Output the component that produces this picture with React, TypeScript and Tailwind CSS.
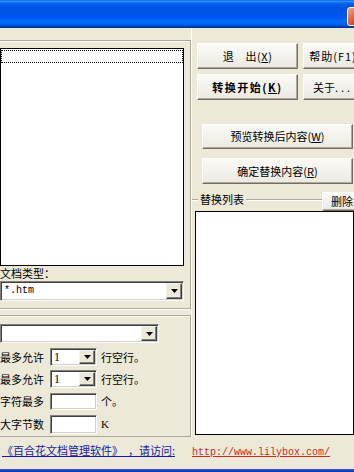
import React from "react";

function Btn({
  children,
  className,
}: {
  children: React.ReactNode;
  className?: string;
}) {
  return (
    <div
      className={`shrink-0 flex items-center justify-center whitespace-nowrap bg-[linear-gradient(#fbfaf6,#ebe9e1)] border border-t-white border-l-white border-r-[#716f64] border-b-[#716f64] shadow-[inset_-1px_-1px_0_#aca899] leading-none ${className ?? ""}`}
    >
      {children}
    </div>
  );
}

function DropBtn() {
  return (
    <div className="w-[16px] h-full shrink-0 flex items-center justify-center bg-[#ece9d8] border border-t-[#f4f3ee] border-l-[#f4f3ee] border-r-[#404040] border-b-[#404040] shadow-[inset_-1px_-1px_0_#808080]">
      <svg width="7" height="4" viewBox="0 0 7 4">
        <polygon points="0,0 7,0 3.5,4" fill="#000" />
      </svg>
    </div>
  );
}

function Combo({
  value,
  serif,
  className,
}: {
  value?: string;
  serif?: boolean;
  className?: string;
}) {
  return (
    <div
      className={`flex items-stretch bg-white border border-t-[#808080] border-l-[#808080] border-r-white border-b-white shadow-[inset_1px_1px_0_#404040,inset_-1px_-1px_0_#d4d0c8] p-[1px] ${className ?? ""}`}
    >
      <span
        className={`flex-1 pl-[2px] flex items-center leading-none ${serif ? "font-['Liberation_Serif',serif] text-[12px]" : "font-['Liberation_Mono',monospace] text-[10px]"}`}
      >
        {value}
      </span>
      <DropBtn />
    </div>
  );
}

function Field({ className }: { className?: string }) {
  return (
    <div
      className={`bg-white border border-t-[#808080] border-l-[#808080] border-r-white border-b-white shadow-[inset_1px_1px_0_#404040,inset_-1px_-1px_0_#d4d0c8] ${className ?? ""}`}
    />
  );
}

function OptRow({
  label,
  combo,
  tail,
  className,
}: {
  label: string;
  combo: boolean;
  tail: string;
  className?: string;
}) {
  return (
    <div className={`flex items-center ${className ?? ""}`}>
      <span className="w-[50px] shrink-0 leading-none">{label}</span>
      {combo ? (
        <Combo value="1" serif className="w-[47px] h-full" />
      ) : (
        <Field className="w-[47px] h-full" />
      )}
      <span
        className={`ml-[4px] leading-none ${tail === "K" ? "font-['Liberation_Serif',serif] text-[11px]" : ""}`}
      >
        {tail}
      </span>
    </div>
  );
}

export default function App() {
  return (
    <div className="w-[354px] h-[472px] overflow-hidden bg-[#ece9d8] flex flex-col text-[11px] text-black font-['Noto_Sans_CJK_SC','Noto_Sans',sans-serif]">
      {/* title bar */}
      <div className="h-[28px] shrink-0 flex justify-end items-start pt-[7px] bg-[linear-gradient(180deg,#0058ee_0%,#3593ff_4%,#288eff_6%,#127dff_8%,#036ffc_10%,#0262ee_14%,#0057e5_20%,#0054e3_24%,#0055eb_56%,#005bf5_66%,#026afe_76%,#0062ef_86%,#0052d6_92%,#0040ab_94%,#003092_100%)]">
        <div className="w-[21px] h-[19px] shrink-0 mr-[-14px] rounded-[3px] border border-white bg-[linear-gradient(135deg,#f2a88c,#dc4c22_55%,#c43a14)]" />
      </div>

      <div className="h-[409px] shrink-0 flex">
        {/* left column */}
        <div className="w-[191px] shrink-0 flex flex-col pt-[12px]">
          <div className="h-[269px] shrink-0 flex flex-col border-t border-r border-b border-[#aca899] shadow-[inset_0_1px_0_#fff,0_1px_0_#fff]">
            <div className="mt-[7px] w-[184px] h-[218px] shrink-0 bg-white border border-black pt-[1px]">
              <div className="h-[13px] border border-dotted border-black" />
            </div>
            <div className="h-[15px] shrink-0 leading-[15px]">文档类型：</div>
            <Combo value="*.htm" className="w-[184px] h-[20px] shrink-0" />
          </div>

          <div className="mt-[6px] flex-1 flex flex-col border-t border-r border-b border-[#aca899] shadow-[inset_0_1px_0_#fff]">
            <Combo className="mt-[8px] w-[159px] h-[19px] shrink-0" />
            <OptRow label="最多允许" combo tail="行空行。" className="mt-[5px] h-[18px]" />
            <OptRow label="最多允许" combo tail="行空行。" className="mt-[4px] h-[18px]" />
            <OptRow label="字符最多" combo={false} tail="个。" className="mt-[5px] h-[17px]" />
            <OptRow label="大字节数" combo={false} tail="K" className="mt-[5px] h-[19px]" />
          </div>
        </div>

        {/* right column */}
        <div className="flex-1 min-w-0 flex flex-col border-l border-white pt-[15px]">
          <div className="flex gap-[5px] pl-[5px]">
            <Btn className="w-[101px] h-[26px] tracking-[0.5px]">
              退　出(<u>X</u>)
            </Btn>
            <Btn className="w-[60px] h-[26px] tracking-[1px]">帮助(F1)</Btn>
          </div>
          <div className="flex gap-[5px] pl-[5px] mt-[5px]">
            <Btn className="w-[101px] h-[26px] font-bold tracking-[1.5px]">
              转换开始(<u>K</u>)
            </Btn>
            <Btn className="w-[60px] h-[26px]">
              关于<span className="tracking-[3px]">...</span>
            </Btn>
          </div>
          <Btn className="ml-[10px] mt-[24px] w-[151px] h-[25px]">
            预览转换后内容(<u>W</u>)
          </Btn>
          <Btn className="ml-[10px] mt-[9px] w-[151px] h-[26px]">
            确定替换内容(<u>R</u>)
          </Btn>

          <div className="mt-[8px] flex-1 flex flex-col pb-[2px]">
            <div className="h-[19px] shrink-0 flex items-start">
              <div className="w-[6px] mt-[7px] border-t border-[#aca899] shadow-[0_1px_0_#fff]" />
              <span className="px-[2px] leading-[15px]">替换列表</span>
              <div className="flex-1 mt-[7px] border-t border-[#aca899] shadow-[0_1px_0_#fff]" />
              <Btn className="w-[40px] h-[19px] mr-[-8px]">删除</Btn>
            </div>
            <div className="ml-[3px] flex-1 bg-white border border-black" />
          </div>
        </div>
      </div>

      {/* link row */}
      <div className="flex-1 pt-[6px] pl-[2px] whitespace-nowrap leading-[14px]">
        <span className="inline-block w-[190px]">
          <span className="text-[#1a1aa6] underline">
            《百合花文档管理软件》&nbsp;&nbsp;，请访问:
          </span>
        </span>
        <span className="text-[#cc2a22] underline font-['Liberation_Mono',monospace] text-[10px]">
          http://www.lilybox.com/
        </span>
      </div>
      <div className="h-[3px] shrink-0 bg-[linear-gradient(#2f5ad8,#0831b9)]" />
    </div>
  );
}
